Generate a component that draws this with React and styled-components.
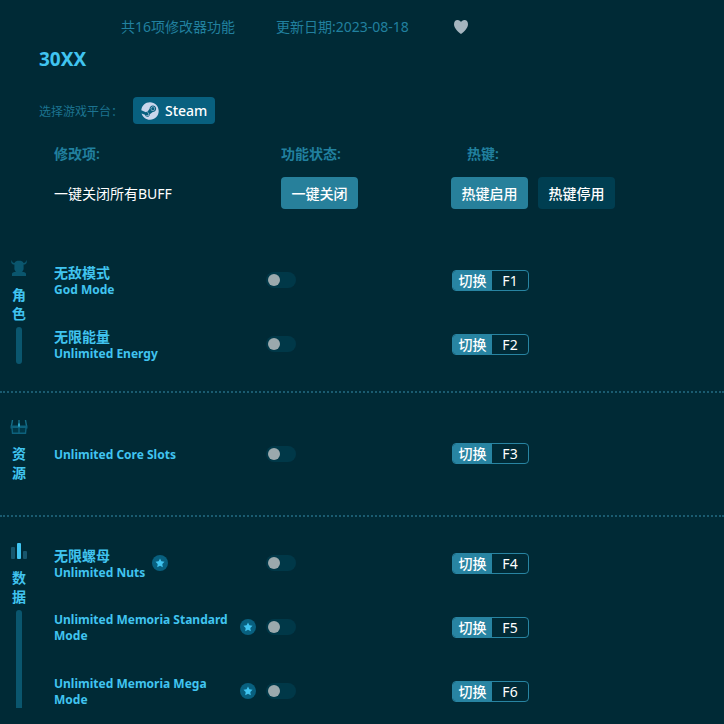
import { useState } from "react";
import styled, { createGlobalStyle } from "styled-components";
import { FaSteam } from "react-icons/fa";

const GlobalStyle = createGlobalStyle`
    * {
        box-sizing: border-box;
    }

    body {
        margin: 0;
        background-color: #002a36;
        font-family: "Noto Sans", "Noto Sans CJK SC", sans-serif;
        font-size: 14px;
    }

    button {
        font-family: inherit;
        border: none;
        cursor: pointer;
    }
`

const Page = styled.main`
    display: flex;
    flex-direction: column;
    height: 100vh;
    padding-bottom: 16px;
`

const Meta = styled.div`
    display: grid;
    grid-template-columns: 155px 178px auto;
    align-items: center;
    justify-content: start;
    padding: 17px 0 0 121px;
    line-height: 20px;
    color: #21809f;
`

const HeartButton = styled.button`
    display: flex;
    padding: 0;
    background: none;
    color: #a5b5bf;
`

const Title = styled.h1`
    margin: 0;
    padding: 8px 39px 0;
    font-size: 19px;
    line-height: 28px;
    font-weight: 700;
    color: #40c4f0;
`

const Platform = styled.div`
    display: flex;
    align-items: center;
    gap: 10px;
    padding: 24px 39px 0;
    font-size: 12px;
    color: #1c7390;
`

const PlatformButton = styled.button`
    display: flex;
    align-items: center;
    gap: 6px;
    height: 27px;
    padding: 0 8px;
    border-radius: 4px;
    background-color: #08607f;
    color: #ffffff;
    font-size: 14px;
    font-weight: 500;

    svg {
        color: #c9d6ec;
    }
`

const Columns = styled.div`
    display: grid;
    grid-template-columns: 227px 186px 1fr;
    padding: 20px 0 0 54px;
    line-height: 20px;
    font-weight: 600;
    color: #21809f;
`

const Actions = styled.div`
    display: grid;
    grid-template-columns: 227px 170px 1fr;
    align-items: center;
    padding: 13px 0 25px 54px;
    color: #ffffff;
`

const ButtonGroup = styled.div`
    display: flex;
    gap: 10px;
`

const ActionButton = styled.button`
    width: 77px;
    height: 32px;
    padding: 0 0 1px;
    border-radius: 4px;
    background-color: ${({ $dark }) => $dark ? "#003e51" : "#27809b"};
    color: #ffffff;
    font-size: 14px;
    font-weight: 500;
`

const List = styled.div`
    flex: 1;
    min-height: 0;
    overflow-y: auto;
    scrollbar-width: none;
`

const Section = styled.section`
    display: flex;
    min-height: 124px;
    padding: 14px 0 15px;
    border-bottom: 2px dotted #1a5b70;
`

const Side = styled.div`
    display: flex;
    flex-direction: column;
    align-items: center;
    width: 38px;
    margin-right: 16px;
    padding: 12px 0;
`

const SideTitle = styled.h2`
    width: 14px;
    margin: 9px 0 4px;
    font-size: 14px;
    line-height: 19px;
    font-weight: 700;
    color: #40c4f0;
    word-break: break-all;
`

const SideBar = styled.div`
    flex: 1;
    width: 6px;
    border-radius: 3px;
    background-color: #0a566e;
`

const Rows = styled.div`
    flex: 1;
    display: flex;
    flex-direction: column;
    justify-content: center;
`

const Row = styled.div`
    display: grid;
    grid-template-columns: 202px 176px 1fr;
    column-gap: 10px;
    align-items: center;
    height: 64px;
    font-size: 12px;
    line-height: 16px;
    font-weight: 700;
    color: #40c4f0;
`

const Name = styled.div`
    display: flex;
    align-items: center;
    gap: 7px;

    label {
        padding-top: 2px;
    }
`

const NameZh = styled.div`
    font-size: 14px;
    line-height: 18px;
`

const Star = styled.span`
    display: flex;
    align-items: center;
    justify-content: center;
    flex-shrink: 0;
    width: 16px;
    height: 16px;
    border-radius: 50%;
    background-color: #08607f;
`

const Switch = styled.input`
    appearance: none;
    display: flex;
    align-items: center;
    width: 30px;
    height: 16px;
    margin: 0;
    padding: 0 2px;
    border-radius: 8px;
    background-color: #003848;
    cursor: pointer;

    &::before {
        content: "";
        width: 12px;
        height: 12px;
        border-radius: 50%;
        background-color: #9ba9ad;
    }

    &:checked {
        justify-content: flex-end;
        background-color: #27809b;
    }
`

const Hotkey = styled.button`
    display: flex;
    width: 77px;
    height: 21px;
    padding: 0;
    border: 1px solid #2884a2;
    border-radius: 4px;
    background: none;
    overflow: hidden;
    color: #ffffff;
    font-size: 14px;
    line-height: 20px;
`

const HotkeyAction = styled.span`
    width: 39px;
    background-color: #2884a2;
    font-weight: 500;
`

const HotkeyValue = styled.span`
    flex: 1;
`

const Heart = () => (
    <svg width="14" height="14" viewBox="0 0 14 14" fill="currentColor">
        <path d="M7 14C5.6 13 0 8.600 0 4.200C0 1.600 1.500 0 3.500 0C5.200 0 6.500 1 7 2.200C7.500 1 8.800 0 10.500 0C12.500 0 14 1.600 14 4.200C14 8.600 8.400 13 7 14Z" />
    </svg>
)

const RoleIcon = () => (
    <svg width="16" height="16" viewBox="0 0 16 16" fill="#0a566e">
        <path d="M.8 0C-.6 2.500 .6 4.600 3.400 4.600V9C3.400 10 4.500 11 4.800 12C2.500 12 1 12.600 1 14V16H15V14C15 12.600 13.500 12 11.200 12C11.500 11 12.600 10 12.600 9V4.600C15.400 4.600 16.600 2.500 15.200 0C15 2 14.200 3 12.600 3C12 1.400 10.200 .8 8 .8S4 1.400 3.400 3C1.800 3 1 2 .8 0Z" />
    </svg>
)

const ResourceIcon = () => (
    <svg width="18" height="16" viewBox="0 0 18 16">
        <path d="M2.500 1L1.500 7M9 1V6M15.500 1L16.500 7" stroke="#15708b" strokeWidth="1.400" fill="none" />
        <path d="M.5 6.500H17.500V9.500H.5Z" fill="#0d617c" />
        <path d="M2 9L2.500 14.300H15.500L16 9M9 9V14" stroke="#0d617c" strokeWidth="1.400" fill="#003848" />
        <path d="M8 4.500H10V7L9 8.500L8 7Z" fill="#2aa0c2" />
    </svg>
)

const DataIcon = () => (
    <svg width="16" height="16" viewBox="0 0 16 16">
        <rect x="0" y="4" width="4" height="12" rx="1" fill="#17566d" />
        <rect x="6" y="0" width="4" height="16" rx="1" fill="#40c4f0" />
        <rect x="12" y="8" width="4" height="8" rx="1" fill="#17566d" />
    </svg>
)

const StarIcon = () => (
    <svg width="10" height="10" viewBox="0 0 10 10">
        <path d="M5 .5L6.400 3.300L9.500 3.800L7.300 6L7.800 9.200L5 7.700L2.200 9.200L2.700 6L.5 3.800L3.600 3.300Z" fill="#40c4f0" />
    </svg>
)

const sections = [
    {
        title: "角色",
        icon: <RoleIcon />,
        bar: true,
        items: [
            { zh: "无敌模式", en: "God Mode", hotkey: "F1" },
            { zh: "无限能量", en: "Unlimited Energy", hotkey: "F2" },
        ],
    },
    {
        title: "资源",
        icon: <ResourceIcon />,
        items: [
            { en: "Unlimited Core Slots", hotkey: "F3" },
        ],
    },
    {
        title: "数据",
        icon: <DataIcon />,
        bar: true,
        items: [
            { zh: "无限螺母", en: "Unlimited Nuts", hotkey: "F4", star: true },
            { en: "Unlimited Memoria Standard Mode", hotkey: "F5", star: true },
            { en: "Unlimited Memoria Mega Mode", hotkey: "F6", star: true },
        ],
    },
]

const Cheat = ({ item }) => {
    const [enabled, setEnabled] = useState(false);

    return (
        <Row>
            <Name>
                <label htmlFor={item.hotkey}>
                    {item.zh && <NameZh>{item.zh}</NameZh>}
                    <div>{item.en}</div>
                </label>
                {item.star && <Star><StarIcon /></Star>}
            </Name>
            <Switch
                id={item.hotkey}
                type="checkbox"
                role="switch"
                checked={enabled}
                onChange={() => setEnabled(!enabled)}
            />
            <Hotkey onClick={() => setEnabled(!enabled)}>
                <HotkeyAction>切换</HotkeyAction>
                <HotkeyValue>{item.hotkey}</HotkeyValue>
            </Hotkey>
        </Row>
    )
}

const App = () => {
    return (
        <Page lang="zh-CN">
            <GlobalStyle />
            <Meta>
                <span>共16项修改器功能</span>
                <span>更新日期:2023-08-18</span>
                <HeartButton aria-label="收藏"><Heart /></HeartButton>
            </Meta>
            <Title>30XX</Title>
            <Platform>
                <span>选择游戏平台：</span>
                <PlatformButton><FaSteam size={18} />Steam</PlatformButton>
            </Platform>
            <Columns>
                <span>修改项:</span>
                <span>功能状态:</span>
                <span>热键:</span>
            </Columns>
            <Actions>
                <span>一键关闭所有BUFF</span>
                <ActionButton>一键关闭</ActionButton>
                <ButtonGroup>
                    <ActionButton>热键启用</ActionButton>
                    <ActionButton $dark>热键停用</ActionButton>
                </ButtonGroup>
            </Actions>
            <List>
                {sections.map((section) =>
                    <Section key={section.title}>
                        <Side>
                            {section.icon}
                            <SideTitle>{section.title}</SideTitle>
                            {section.bar && <SideBar />}
                        </Side>
                        <Rows>
                            {section.items.map((item) => <Cheat key={item.hotkey} item={item} />)}
                        </Rows>
                    </Section>
                )}
            </List>
        </Page>
    )
}

export default App;
